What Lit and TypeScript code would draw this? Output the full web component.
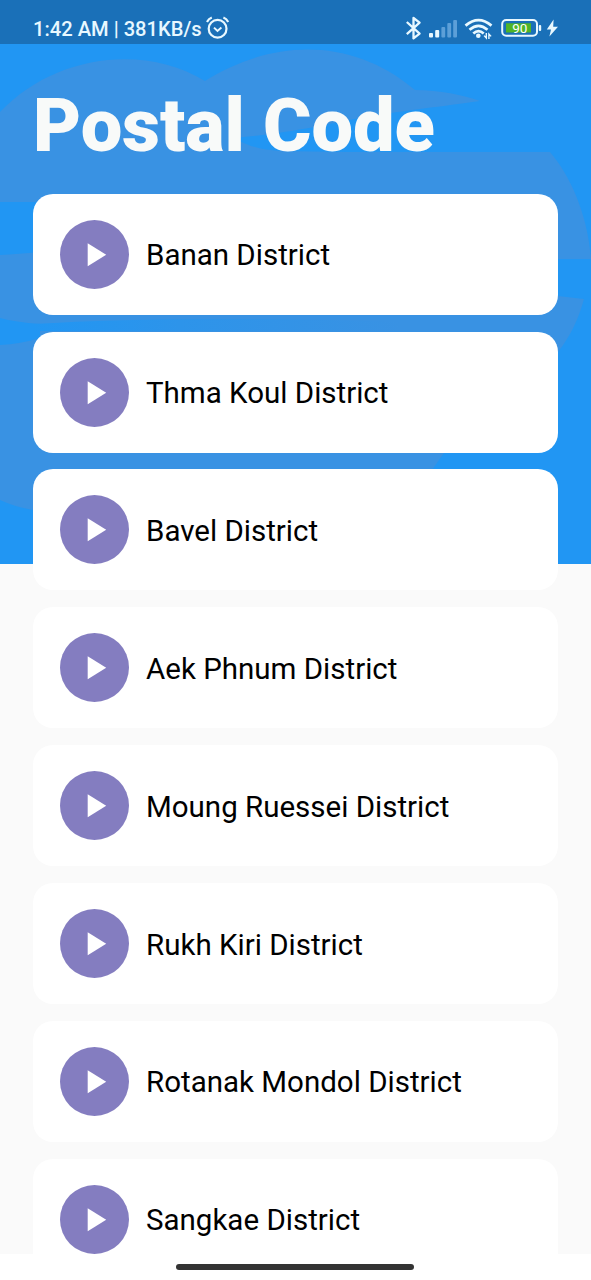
import { LitElement, html, svg, css } from "lit";
import { customElement, property } from "lit/decorators.js";

@customElement("status-bar")
class StatusBar extends LitElement {
  static styles = css`
    :host {
      display: flex;
      flex: none;
      box-sizing: border-box;
      height: 44px;
      padding: 13px 32px 0 33px;
      justify-content: space-between;
      background: #1a70b8;
      color: #e8f8ff;
      font: 500 20.15px/30px Roboto, sans-serif;
    }
    .side { display: flex; align-items: flex-start; }
    .clock { white-space: nowrap; padding-top: 1px; }
    svg { display: block; flex: none; }
    .alarm { margin: 3px 0 0 4px; }
    .num { font: 400 13.5px Roboto, sans-serif; fill: #fff; }
  `;
  render() {
    return html`
      <div class="side">
        <span class="clock">1:42 AM | 381KB/s</span>
        <svg class="alarm" width="24" height="24" viewBox="0 0 24 24" fill="none" stroke="#e8f8ff">
          <circle cx="11.6" cy="12.8" r="8.9" stroke-width="2.2" />
          <path d="M8 11.6 11.5 15 15.4 11.6" stroke-width="2" />
          <path d="M1 6C2 4 3.6 2.5 5.8 1.6M22.2 6C21.2 4 19.6 2.5 17.4 1.6" stroke-width="2.2" />
        </svg>
      </div>
      <div class="side">
        <svg width="156" height="28" viewBox="403 13 156 28">
          <path d="M406.8 22 419.6 33.6 413.5 38.4V18L419.6 22.6 406.8 34.2"
            fill="none" stroke="#e8f8ff" stroke-width="2.3" stroke-linejoin="round" />
          <g fill="#e8f8ff">
            <rect x="429" y="33" width="4" height="4.5" rx="1" />
            <rect x="435.2" y="30" width="4" height="7.5" rx="1" />
            <g fill="#5c9fd8">
              <rect x="441.4" y="27" width="3.8" height="10.5" rx="1" />
              <rect x="447.3" y="23" width="3.8" height="14.5" rx="1" />
              <rect x="453.2" y="20" width="3.8" height="17.5" rx="1" />
            </g>
          </g>
          <g fill="none" stroke="#e8f8ff" stroke-width="2.7">
            <path d="M465.5 25.6Q478.5 14.5 491.5 25.6" />
            <path d="M469.5 29.8Q478.5 21.8 487.5 29.8" />
            <path d="M473.3 33.6Q478.5 28.8 483.7 33.6" />
          </g>
          <circle cx="478.3" cy="35.8" r="2.3" fill="#e8f8ff" />
          <path d="M486.3 33v5l-2.2-2.4M488.9 39v-5l2.2 2.4" fill="none" stroke="#e8f8ff" stroke-width="1.4" />
          <rect x="502.2" y="20" width="34.8" height="15.8" rx="4" fill="none" stroke="#e8f8ff" stroke-width="2" />
          <rect x="506" y="23.3" width="25" height="9.2" fill="#4eb427" />
          <rect x="538.8" y="25" width="2.4" height="6" rx="1" fill="#e8f8ff" />
          <text class="num" x="512.3" y="33.2" textLength="15">90</text>
          <path d="M553.6 19.5 546.8 29.6H551L549.4 36.5 558 26.8H553.2Z" fill="#e8f8ff" />
        </svg>
      </div>
    `;
  }
}

@customElement("district-card")
class DistrictCard extends LitElement {
  @property() name = "";
  static styles = css`
    :host {
      display: flex;
      box-sizing: border-box;
      flex: none;
      height: 121px;
      padding-left: 27px;
      align-items: center;
      gap: 17px;
      border-radius: 20px;
      background: #fff;
      color: #000;
      font: 400 29.5px/36px Roboto, sans-serif;
    }
    svg { display: block; flex: none; }
    .label { padding-top: 2px; white-space: nowrap; }
  `;
  render() {
    return html`
      <svg width="69" height="69" viewBox="0 0 69 69">
        <circle cx="34.5" cy="34.5" r="34.5" fill="#847dc0" />
        <path d="M27.7 23.2V46.2L46.2 34.7Z" fill="#fff" />
      </svg>
      <span class="label">${this.name}</span>
    `;
  }
}

@customElement("app-root")
class AppRoot extends LitElement {
  private districts = [
    "Banan District",
    "Thma Koul District",
    "Bavel District",
    "Aek Phnum District",
    "Moung Ruessei District",
    "Rukh Kiri District",
    "Rotanak Mondol District",
    "Sangkae District",
  ];
  static styles = css`
    :host {
      display: block;
      position: relative;
      width: 100%;
      height: 1280px;
      overflow: hidden;
      background: #fafafa;
    }
    .backdrop { position: absolute; left: 0; top: 0; display: block; }
    .page { position: relative; display: flex; flex-direction: column; height: 1254px; overflow: hidden; }
    .title {
      flex: none;
      margin: 37px 0 0 33px;
      height: 112.8px;
      color: #f8faf9;
      font: 900 74px/90px Roboto, sans-serif;
      letter-spacing: -0.1px;
      white-space: nowrap;
    }
    .list { display: flex; flex: none; flex-direction: column; gap: 16.85px; padding: 0 33px; }
    .nav { position: relative; display: flex; justify-content: center; height: 26px; background: #fff; }
    .handle { width: 238px; height: 6px; margin: 10px 0 0 -1px; border-radius: 3px; background: #333; }
  `;
  private blobs() {
    return svg`
      <defs>
        <linearGradient id="mist">
          <stop offset="0" stop-color="#2196f3" />
          <stop offset="0.4" stop-color="#2d94ea" />
          <stop offset="1" stop-color="#3992e3" />
        </linearGradient>
      </defs>
      <rect width="591" height="564" fill="#2196f3" />
      <path fill="#3992e3" d="M0 112C55 54 145 44 205 81C270 40 350 35 415 90C440 90 463 95 480 101C430 108 400 111 360 118C310 128 280 134 235 138Q250 149 280 151C320 152 370 152 430 152H550C570 175 588 215 591 259H558V296L584 299C579 318 570 337 558 352C530 400 480 425 444 453L432 470V520H60L33 510Q15 507 0 500V345Q20 344 40 338V324Q15 322 0 318V255Q18 254 40 252V202H0Z" />
      <path fill="url(#mist)" d="M33 324Q180 315 400 322V331H33Z" />
    `;
  }
  render() {
    return html`
      <svg class="backdrop" width="591" height="564" viewBox="0 0 591 564">${this.blobs()}</svg>
      <div class="page">
        <status-bar></status-bar>
        <div class="title">Postal Code</div>
        <div class="list">
          ${this.districts.map((d) => html`<district-card .name=${d}></district-card>`)}
        </div>
      </div>
      <div class="nav"><div class="handle"></div></div>
    `;
  }
}
